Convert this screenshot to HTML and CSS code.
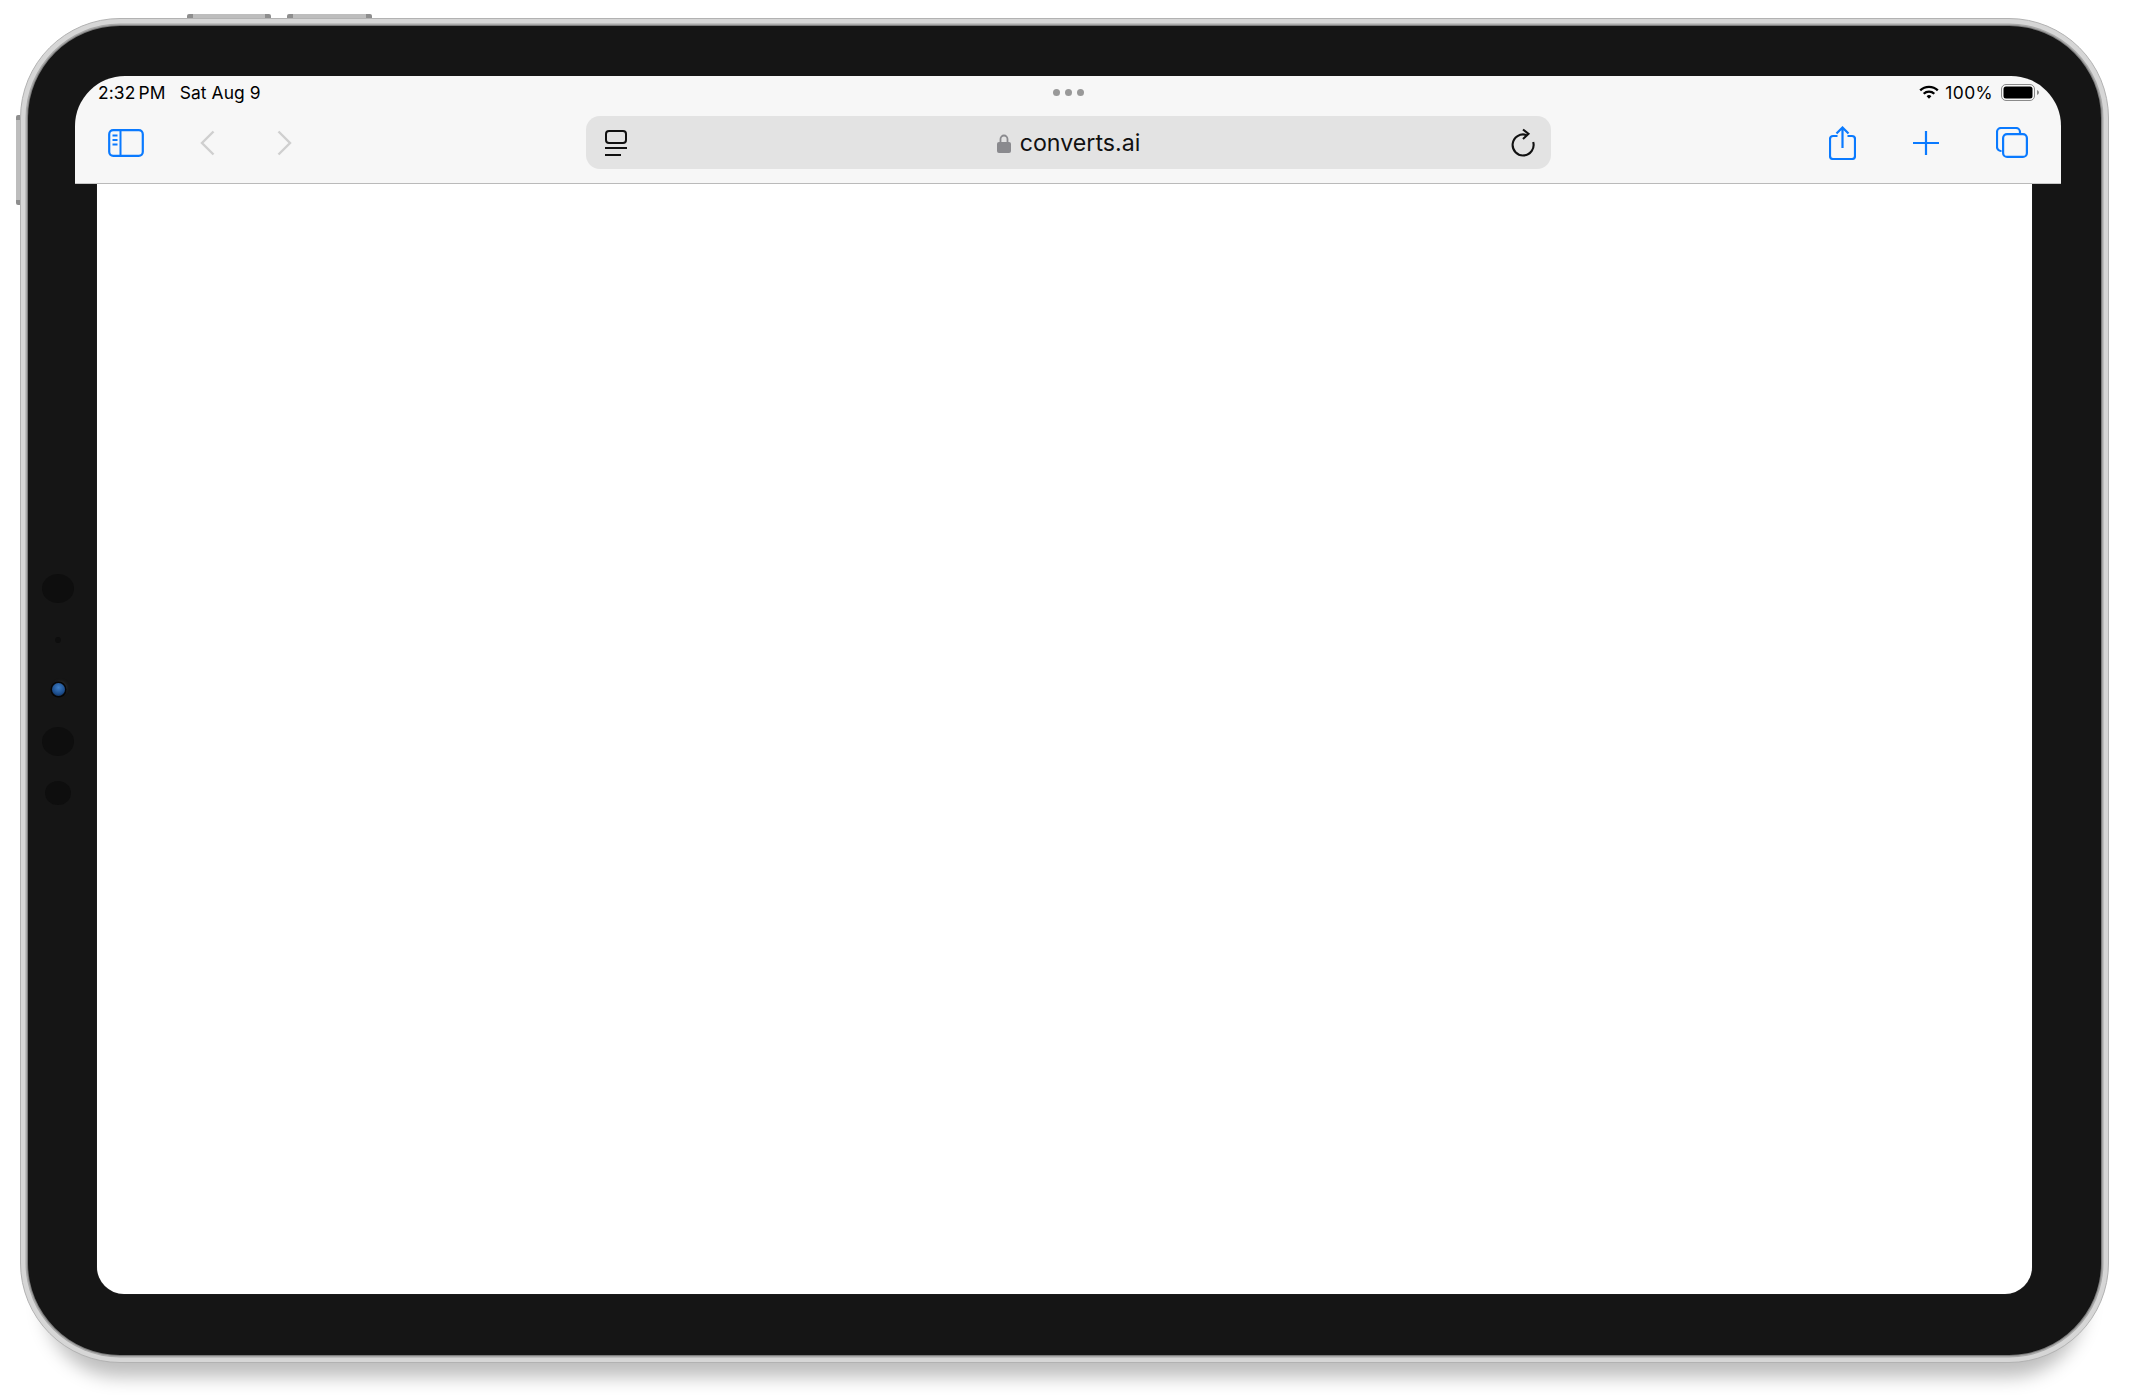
FILE: index.html
```html
<!DOCTYPE html>
<html lang="en">
<head>
<meta charset="utf-8">
<title>converts.ai</title>
<link rel="stylesheet" href="styles.css">
</head>
<body>
<div class="stage">
  <div class="device">
    <span class="hw hw-top-a"></span>
    <span class="hw hw-top-b"></span>
    <span class="hw hw-side"></span>
    <div class="bezel">
      <span class="sensor sensor-a"></span>
      <span class="sensor sensor-dot"></span>
      <span class="lens"></span>
      <span class="sensor sensor-b"></span>
      <span class="sensor sensor-c"></span>
      <header class="chrome">
        <div class="status">
          <div class="status-left"><span class="time">2:32&#8201;PM</span><span>Sat Aug 9</span></div>
          <div class="dots"><i></i><i></i><i></i></div>
          <div class="status-right">
            <svg class="wifi" width="20" height="14" viewBox="0 0 20 14"><path d="M1.2 5.4A12.5 12.5 0 0 1 18.8 5.4" fill="none" stroke="#000" stroke-width="2.3"/><path d="M4.7 8.7A7.6 7.6 0 0 1 15.3 8.7" fill="none" stroke="#000" stroke-width="2.3"/><path d="M7.6 11.2A3.4 3.4 0 0 1 12.4 11.2L10 13.8Z" fill="#000"/></svg>
            <span class="battery-text">100%</span>
            <svg class="battery" width="38" height="17" viewBox="0 0 38 17"><rect x=".5" y=".5" width="33" height="16" rx="4.5" fill="none" stroke="#8a8a8a"/><rect x="2.5" y="2.5" width="29" height="12" rx="2.5" fill="#000"/><path d="M36 6v5c1.100-.4 2-1.300 2-2.500S37.100 6.400 36 6Z" fill="#8a8a8a"/></svg>
          </div>
        </div>
        <div class="toolbar">
          <div class="tools tools-left">
            <svg class="ic" width="36" height="28" viewBox="0 0 36 28"><rect x="1.200" y="1.200" width="33.600" height="25.600" rx="4" fill="none" stroke="#0a7aff" stroke-width="2.200"/><path d="M12.500 1v26M4.500 6.500h5M4.500 11h5M4.500 15.500h5" fill="none" stroke="#0a7aff" stroke-width="2"/></svg>
            <svg class="ic" width="15" height="26" viewBox="0 0 15 26"><path d="M13.500 1.500 2 13l11.500 11.500" fill="none" stroke="#cfcfcf" stroke-width="2.400"/></svg>
            <svg class="ic" width="15" height="26" viewBox="0 0 15 26"><path d="M1.500 1.500 13 13 1.500 24.500" fill="none" stroke="#cfcfcf" stroke-width="2.400"/></svg>
          </div>
          <div class="url">
            <svg class="url-tabs" width="22" height="27" viewBox="0 0 22 27"><rect x="1" y="1" width="20" height="12" rx="3" fill="none" stroke="#111" stroke-width="2"/><path d="M0 18h22M0 25h16" stroke="#111" stroke-width="2"/></svg>
            <div class="url-host">
              <svg class="lock" width="14" height="19" viewBox="0 0 14 19"><path d="M3.500 9V5a3.500 3.500 0 0 1 7 0v4" fill="none" stroke="#8a8a8e" stroke-width="1.800"/><rect y="8" width="14" height="11" rx="2" fill="#8a8a8e"/></svg>
              <span>converts.ai</span>
            </div>
            <svg class="reload" width="25" height="30" viewBox="0 0 25 30"><path d="M15.500 7A10.500 10.500 0 1 0 22.200 14" fill="none" stroke="#111" stroke-width="2.100"/><path d="M12 1.500 17.500 5.800 12 11" fill="none" stroke="#111" stroke-width="2.100"/></svg>
          </div>
          <div class="tools tools-right">
            <svg class="ic" width="27" height="34" viewBox="0 0 27 34"><path d="M8.500 10H4a3 3 0 0 0-3 3v17a3 3 0 0 0 3 3h19a3 3 0 0 0 3-3V13a3 3 0 0 0-3-3h-4.500" fill="none" stroke="#0a7aff" stroke-width="2.200"/><path d="M13.500 2v20M7.500 7.500l6-6 6 6" fill="none" stroke="#0a7aff" stroke-width="2.200"/></svg>
            <svg class="ic" width="26" height="24" viewBox="0 0 26 24"><path d="M0 12h26M13 0v24" fill="none" stroke="#0a7aff" stroke-width="2.200"/></svg>
            <svg class="ic" width="32" height="31" viewBox="0 0 32 31"><path d="M5.500 24H5a4 4 0 0 1-4-4V5a4 4 0 0 1 4-4h15a4 4 0 0 1 4 4v2" fill="none" stroke="#0a7aff" stroke-width="2.200"/><rect x="7.100" y="7.100" width="23.800" height="22.800" rx="4" fill="none" stroke="#0a7aff" stroke-width="2.200"/></svg>
          </div>
        </div>
      </header>
      <main class="screen"></main>
    </div>
  </div>
</div>
</body>
</html>
```
FILE: styles.css
```css
* { box-sizing: border-box; }
html, body { margin: 0; background: #fff; }
.stage {
  height: 1395px;
  padding: 18px 0 0 20px;
  overflow: hidden;
  font-family: Inter, "Liberation Sans", sans-serif;
  color: #000;
}
.device {
  position: relative;
  width: 2089px;
  height: 1345px;
  padding: 7px;
  border: 1px solid #b2b2b2;
  border-radius: 100px;
  background: #d6d6d6;
  box-shadow: 0 38px 18px -24px rgba(0, 0, 0, .26);
}
.hw { position: absolute; background: linear-gradient(90deg, #8e8e8e 0 6px, #bdbdbd 6px calc(100% - 6px), #8e8e8e calc(100% - 6px)); }
.hw-top-a { top: -5px; left: 166px; width: 84px; height: 4px; border-radius: 2px 2px 0 0; }
.hw-top-b { top: -5px; left: 266px; width: 85px; height: 4px; border-radius: 2px 2px 0 0; }
.hw-side {
  top: 96px; left: -5px; width: 4px; height: 90px; border-radius: 2px 0 0 2px;
  background: linear-gradient(180deg, #8e8e8e 0 5px, #bdbdbd 5px calc(100% - 5px), #8e8e8e calc(100% - 5px));
}
.bezel {
  position: relative;
  height: 1329px;
  padding: 50px 40px 61px 47px;
  border-radius: 92px;
  background: #151515;
  box-shadow: 0 0 0 1px #7c7c7c, 0 0 0 2.5px #a8a8a8;
}
.sensor { position: absolute; background: #0e0e0e; border-radius: 50%; }
.sensor-a { left: 14px; top: 548px; width: 32px; height: 29px; }
.sensor-dot { left: 27px; top: 611px; width: 6px; height: 6px; }
.sensor-b { left: 14px; top: 701px; width: 32px; height: 29px; }
.sensor-c { left: 17px; top: 755px; width: 26px; height: 24px; }
.lens {
  position: absolute; left: 24px; top: 657px; width: 13px; height: 13px; border-radius: 50%;
  background: radial-gradient(circle at 50% 35%, #3f7ec6, #1c4d8c 60%, #0a1c38);
  box-shadow: 0 0 0 1.500px #050505, 2px -2px 3px #2a2a2a;
}
.chrome {
  height: 108px;
  background: #f7f7f7;
  border-bottom: 1px solid #c6c6c6;
  border-radius: 50px 50px 0 0;
}
.status {
  display: grid;
  grid-template-columns: 1fr auto 1fr;
  align-items: center;
  height: 40px;
  padding: 0 22px 8px;
  font-size: 17.400px;
  letter-spacing: .1px;
}
.status-left { display: flex; gap: 14px; padding-left: 1px; }
.dots { display: flex; gap: 5px; }
.dots i { width: 7px; height: 7px; border-radius: 50%; background: #999; }
.status-right { display: flex; align-items: center; justify-content: flex-end; gap: 6px; }
.battery-text { letter-spacing: .4px; }
.battery { margin-left: 2px; }
.toolbar { display: flex; height: 53px; }
.tools { display: flex; align-items: center; width: 511px; }
.tools-left { padding-left: 33px; }
.tools-left .ic:nth-child(2) { margin-left: 56px; }
.tools-left .ic:nth-child(3) { margin-left: 62px; }
.tools-right { justify-content: flex-end; gap: 57px; width: 510px; padding-right: 33px; }
.url {
  position: relative;
  display: flex;
  align-items: center;
  justify-content: center;
  width: 965px;
  height: 53px;
  border-radius: 14px;
  background: #e3e3e3;
}
.url-tabs { position: absolute; left: 19px; top: 14px; }
.reload { position: absolute; right: 15px; top: 12px; }
.url-host { display: flex; align-items: center; gap: 9px; padding-top: 1px; font-size: 23.200px; color: #111; }
.screen {
  height: 1110px;
  margin: 0 29px 0 22px;
  background: #fff;
  border-radius: 0 0 27px 27px;
  box-shadow: 0 0 1px #555;
}
```
